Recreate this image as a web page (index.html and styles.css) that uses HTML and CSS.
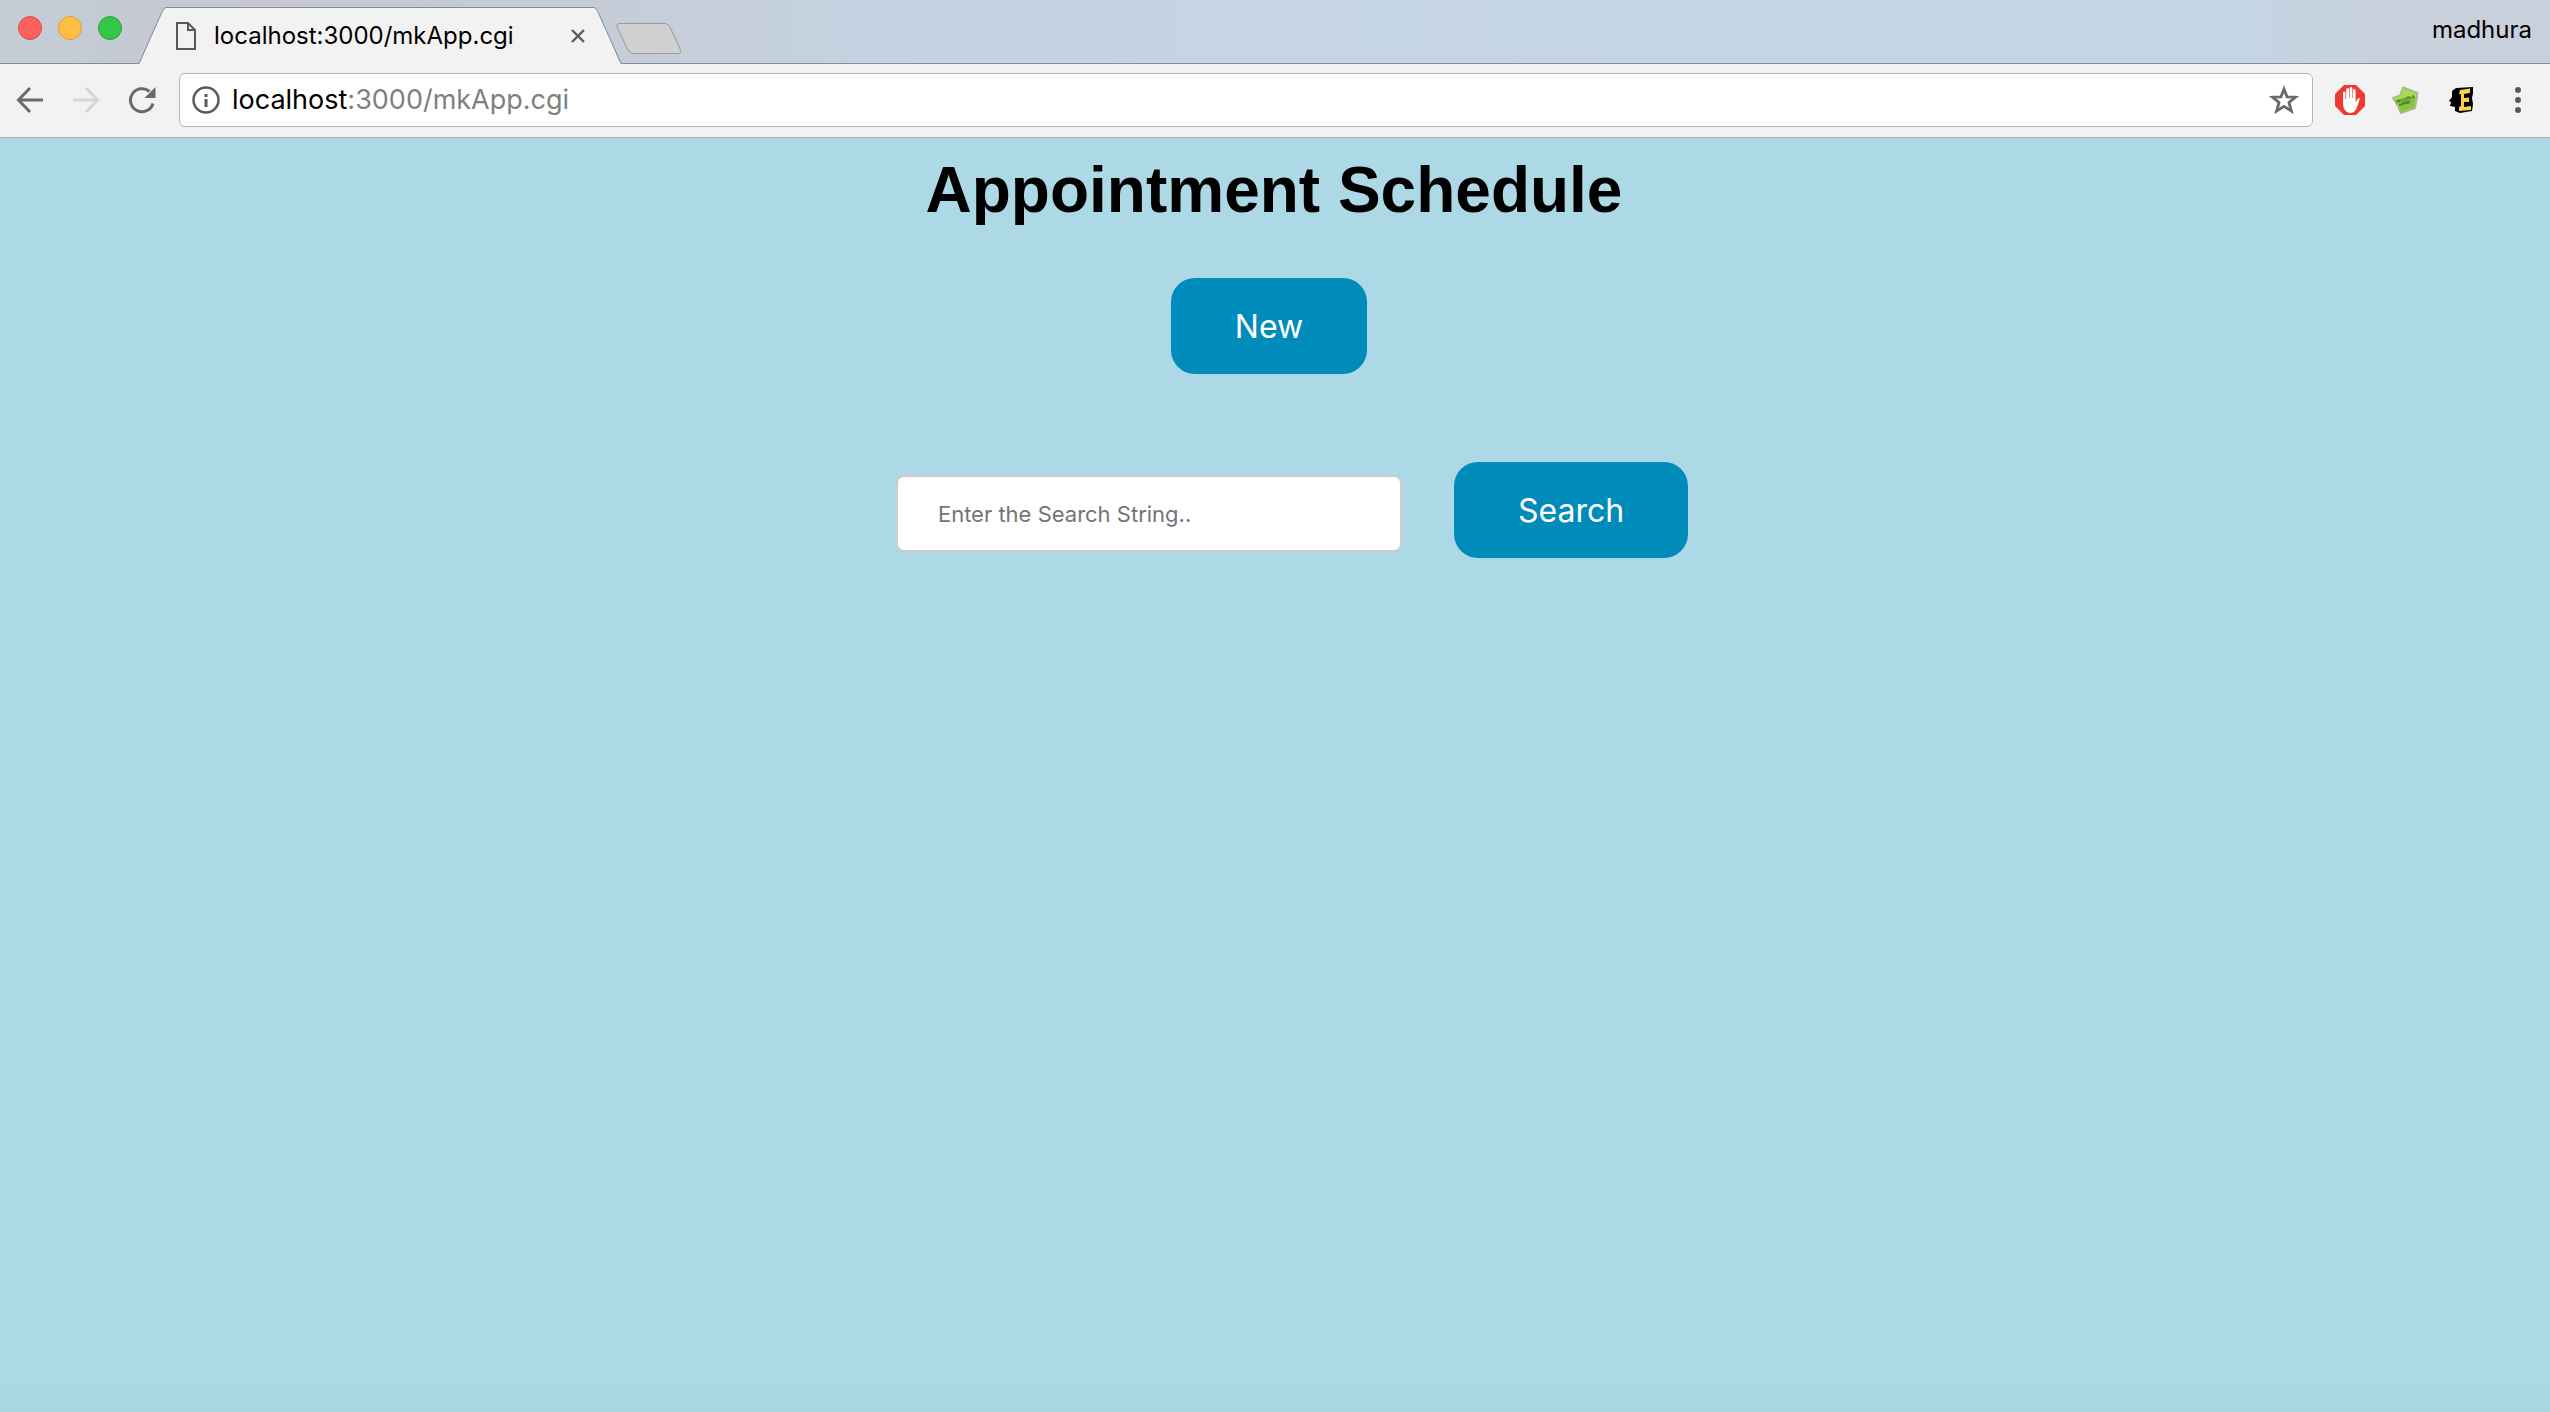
FILE: index.html
```html
<!DOCTYPE html>
<html lang="en">
<head>
<meta charset="utf-8">
<title>localhost:3000/mkApp.cgi</title>
<link rel="stylesheet" href="styles.css">
</head>
<body>
<header class="browser">
  <div class="titlebar">
    <div class="lights">
      <button class="light light-close" aria-label="Close window"></button>
      <button class="light light-minimize" aria-label="Minimize window"></button>
      <button class="light light-zoom" aria-label="Zoom window"></button>
    </div>
    <div class="tab">
      <svg class="tab-edge" width="28" height="58" viewBox="0 0 28 58"><path d="M0 58V57C2 57 2 55 3 54L24 5Q26 1 28 1V58Z" fill="#f2f2f2"/><path d="M0 56.5Q1 56.500 2 54L24.500 4Q26 .5 28 .5" fill="none" stroke="#868d96"/></svg>
      <div class="tab-body">
        <svg class="tab-icon" width="20" height="28" viewBox="0 0 20 28" fill="none" stroke="#5a5a5a" stroke-width="2"><path d="M1 1H12L19 8V27H1ZM12 1V8H19"/></svg>
        <span class="tab-title">localhost:3000/mkApp.cgi</span>
        <button class="tab-close" aria-label="Close tab"><svg width="14" height="14" viewBox="0 0 14 14" stroke="#5a5a5a" stroke-width="2.400"><path d="M1 1L13 13M13 1L1 13"/></svg></button>
      </div>
      <svg class="tab-edge" width="28" height="58" viewBox="0 0 28 58"><path d="M28 58V57C26 57 26 55 25 54L4 5Q2 1 0 1V58Z" fill="#f2f2f2"/><path d="M28 56.500Q27 56.500 26 54L3.500 4Q2 .5 0 .5" fill="none" stroke="#868d96"/></svg>
    </div>
    <button class="new-tab" aria-label="New tab"><svg width="66" height="32" viewBox="0 0 66 32"><path d="M4 .5H49Q52 .5 54 4L64.500 27Q66 30.500 62 30.500H17Q14 30.500 12 27L1 4Q0 .5 4 .5Z" fill="#d0d0d0" stroke="#959aa1"/></svg></button>
    <button class="profile">madhura</button>
  </div>
  <nav class="toolbar" aria-label="Browser">
    <button class="tool" aria-label="Back"><svg width="28" height="28" viewBox="0 0 28 28" fill="none" stroke="#6a6a6a" stroke-width="3"><path d="M27 14H3M14 2L2.500 14L14 26"/></svg></button>
    <button class="tool" aria-label="Forward" disabled><svg width="28" height="28" viewBox="0 0 28 28" fill="none" stroke="#d6d6d6" stroke-width="3"><path d="M1 14H25M14 2L25.500 14L14 26"/></svg></button>
    <button class="tool" aria-label="Reload"><svg width="28" height="28" viewBox="0 0 28 28"><path d="M21.500 5.500A11.500 11.500 0 1 0 25 17.500" fill="none" stroke="#6a6a6a" stroke-width="3"/><path d="M27.500 1V12H16.500Z" fill="#6a6a6a"/></svg></button>
    <div class="omnibox">
      <button class="tool" aria-label="Site information"><svg width="28" height="28" viewBox="0 0 28 28"><circle cx="14" cy="14" r="12.500" fill="none" stroke="#5a5a5a" stroke-width="2.500"/><path d="M12.500 8h3v3h-3zM12.500 13h3v8h-3z" fill="#5a5a5a"/></svg></button>
      <a class="url" href="#"><span class="url-host">localhost</span>:3000/mkApp.cgi</a>
      <button class="tool" aria-label="Bookmark this page"><svg width="30" height="30" viewBox="0 0 30 30"><path d="M15 4L18 11.800L26.500 12.200L20 17.500L22.400 26L15 21.300L7.600 26L10 17.500L3.500 12.200L12 11.800Z" fill="none" stroke="#6a6a6a" stroke-width="2.800"/></svg></button>
    </div>
    <div class="extensions">
      <button class="tool" aria-label="Ad blocker"><svg width="30" height="30" viewBox="0 0 30 30"><path d="M9 0H21L30 9V21L21 30H9L0 21V9Z" fill="#ee3a32"/><path d="M8 18V7.500Q9.200 5.500 10.500 7.500V14H11.200V4Q12.600 2 14 4V13H14.600V3Q16 1 17.400 3V13H18V5Q19.400 3 20.600 5V17L22 15Q23.500 12 25 13.500L22 22Q20 28 15 28Q8 27 8 18Z" fill="#fff"/></svg></button>
      <button class="tool" aria-label="Invisible Hand"><svg width="30" height="30" viewBox="0 0 30 30"><path d="M12 2.500L26.500 8L24 23L10 28L7 21L2 13L9 10.500Z" fill="#83c63d" stroke="#a4bc86" stroke-width="2" stroke-linejoin="round"/><path d="M12 3.500L25.500 8.500L25 12L5 17L3 13.500L10 11Z" fill="#a6dc54"/><g transform="rotate(-17 15 15)" fill="#2d501c" font-family="Liberation Sans" font-weight="700"><text x="5" y="15" font-size="4">INVISIBLE</text><text x="7" y="19" font-size="4">HAND</text></g></svg></button>
      <button class="tool" aria-label="E extension"><svg width="30" height="30" viewBox="0 0 30 30"><path d="M9 3L26 2L26 8L25 13L26 19L25 26L13 28L8 26V22L3 21L4 17L2 16L5 12V6Z" fill="#000"/><path d="M13 5L23 3.500V8L17 9V13L22 12.500V17H17V22L24 21V25L12 26V22L14 21V9H12Z" fill="#fbd149"/></svg></button>
      <button class="tool" aria-label="Menu"><svg width="30" height="30" viewBox="0 0 30 30" fill="#5a5a5a"><circle cx="15" cy="5" r="3"/><circle cx="15" cy="15" r="3"/><circle cx="15" cy="25" r="3"/></svg></button>
    </div>
  </nav>
</header>
<main class="page">
  <h1 class="heading">Appointment Schedule</h1>
  <button class="btn btn-new">New</button>
  <form class="search">
    <input class="search-input" type="text" aria-label="Search appointments" placeholder="Enter the Search String..">
    <button class="btn" type="button">Search</button>
  </form>
</main>
</body>
</html>
```
FILE: styles.css
```css
* { box-sizing: border-box; }

body {
  margin: 0;
  min-height: 100vh;
  display: flex;
  flex-direction: column;
  background: #add8e6;
  font-family: Inter, "Liberation Sans", sans-serif;
}

button {
  margin: 0;
  padding: 0;
  border: 0;
  background: none;
  color: inherit;
  font: inherit;
}

svg { display: block; }

.titlebar {
  display: flex;
  height: 64px;
  padding-right: 18px;
  border-bottom: 1px solid #868d96;
  background: linear-gradient(90deg, #c5cdd7 0%, #c4c7d0 10%, #c6cedb 27%, #c4d4e3 36%, #c4d5e4 88%, #c8d1db 94%, #c7d0dc 100%);
}

.lights {
  display: flex;
  gap: 16px;
  padding: 16px 16px 0 18px;
}

.light {
  width: 24px;
  height: 24px;
  border: 1px solid;
  border-radius: 50%;
}

.light-close { background: #fc615d; border-color: #de4a46; }
.light-minimize { background: #fdbe41; border-color: #dd9f34; }
.light-zoom { background: #34c84a; border-color: #27a535; }

.tab {
  display: flex;
  height: 58px;
  margin-top: 7px;
}

.tab-body {
  display: flex;
  align-items: center;
  width: 428px;
  padding: 0 9px 2px 10px;
  border-top: 1px solid #868d96;
  background: #f2f2f2;
}

.tab-title {
  flex: 1;
  margin-left: 18px;
  font-size: 24px;
  white-space: nowrap;
}

.new-tab {
  align-self: flex-start;
  margin: 23px 0 0 -6px;
}

.profile {
  align-self: center;
  margin-left: auto;
  padding-bottom: 4px;
  font-size: 24px;
}

.toolbar {
  display: flex;
  align-items: center;
  gap: 28px;
  height: 74px;
  padding: 0 17px 2px 16px;
  border-bottom: 1px solid #b4b4b4;
  background: #f2f2f2;
}

.omnibox {
  display: flex;
  flex: 1;
  align-items: center;
  height: 54px;
  margin-left: -5px;
  padding: 0 13px 0 12px;
  border: 1px solid #b4b4b4;
  border-radius: 6px;
  background: #fff;
}

.url {
  flex: 1;
  margin-left: 12px;
  color: #808080;
  font-size: 27px;
  text-decoration: none;
}

.url-host { color: #000; }

.extensions {
  display: flex;
  gap: 26px;
  margin-left: -6px;
}

.page {
  display: flex;
  flex: 1;
  flex-direction: column;
  align-items: center;
  padding: 16px 18px 16px 16px;
  background: linear-gradient(0deg, #a9d4e2 0, #add8e6 40px);
}

.heading {
  margin: 0;
  font: 700 64px/72px "Liberation Sans", Arial, sans-serif;
}

.btn {
  height: 96px;
  padding: 0 64px;
  border-radius: 24px;
  background: #008cba;
  color: #fff;
  font-size: 32px;
}

.btn-new { margin: 52px 10px 0 0; }

.search {
  display: flex;
  align-items: baseline;
  gap: 52px;
  margin: 88px 0 0 36px;
}

.search-input {
  width: 506px;
  height: 77px;
  padding: 0 40px;
  border: 2px solid #ccc;
  border-radius: 8px;
  background: #fff;
  font: 22px Inter, "Liberation Sans", sans-serif;
}

.search-input::placeholder { color: #757575; }
```
